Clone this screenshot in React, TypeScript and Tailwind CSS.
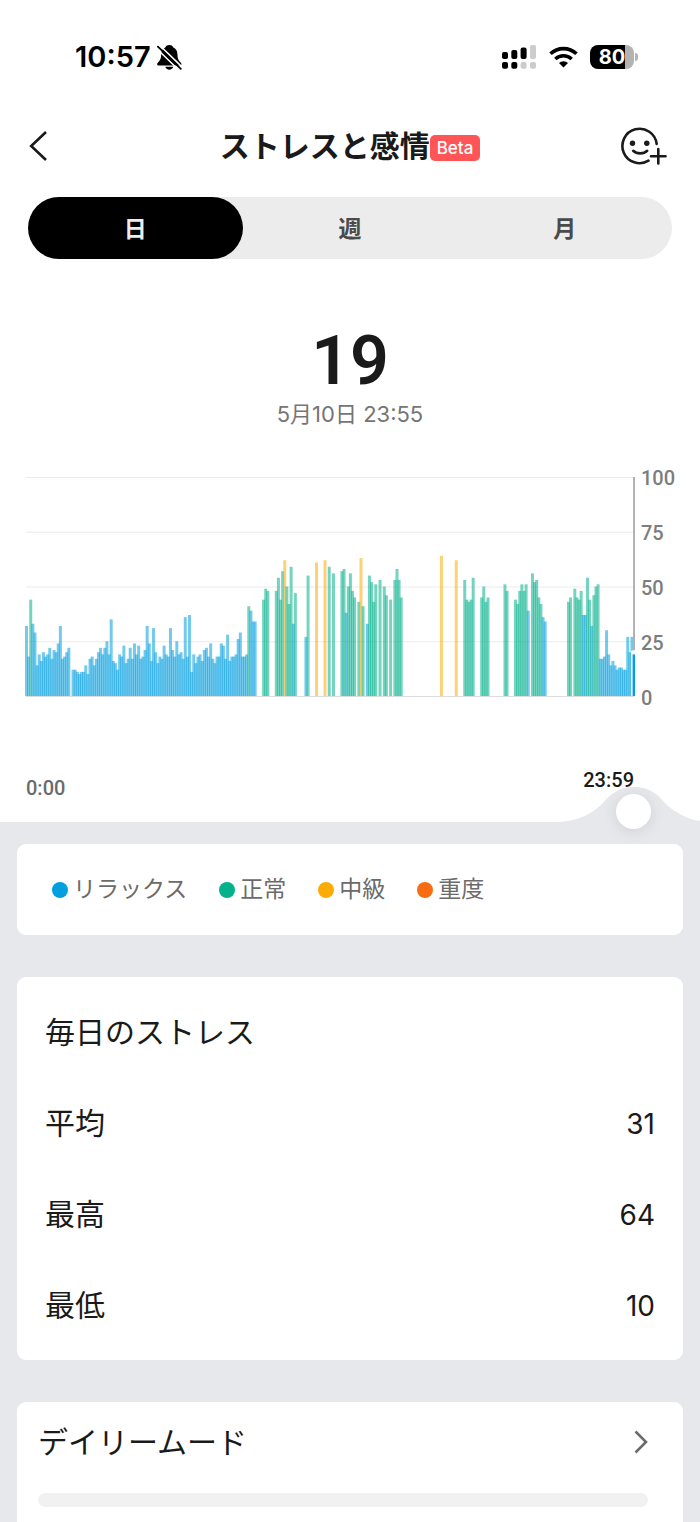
import { useState } from "react";

const FONT = "font-[Inter,'Noto_Sans_CJK_JP',sans-serif]";
const DIGITS = "font-[Roboto,'Noto_Sans_CJK_JP',sans-serif]";

const LAST_SLOT = 287;
const SLOT_WIDTH = 2.117;

// One reading every five minutes, stored as runs: [first slot, readings]
const runs: [number, number[]][] = [
  [0, [32, 18, 44, 33, 29, 14, 19, 16, 20, 18, 19, 22, 17, 21, 20, 24, 32, 17, 18, 20, 22]],
  [22, [12, 12, 11, 10, 11, 11, 14, 10, 17, 18, 14, 17, 20, 22, 19, 22, 25, 19, 35, 16, 15, 12]],
  [44, [19, 18, 23, 15, 17, 22, 17, 24, 19, 23, 17, 18, 21, 32, 24, 16, 31, 20, 15, 18, 17, 23]],
  [66, [19, 18, 31, 21, 18, 25, 19, 20, 17, 36, 18, 37, 11, 19, 15, 18, 19, 16, 21, 22, 18, 24]],
  [88, [17, 15, 18, 18, 24, 23, 17, 28, 16, 18, 18, 19, 26, 29, 18, 18, 19, 41, 39, 34, 34]],
  [112, [44, 49, 48]],
  [118, [48, 54, 44, 57, 62, 50, 42, 59, 33, 47]],
  [132, [27, 55]],
  [137, [61]],
  [141, [62]],
  [143, [59]],
  [145, [56]],
  [149, [57, 58, 38, 50, 56, 48, 45]],
  [157, [43, 63, 41]],
  [161, [33, 55, 52, 43, 51]],
  [167, [53]],
  [169, [50, 46]],
  [172, [44]],
  [174, [53, 58, 53, 45]],
  [196, [64]],
  [203, [62]],
  [207, [53, 44, 43, 44, 54]],
  [215, [45, 50, 43, 45]],
  [226, [51, 48]],
  [231, [44, 42, 48, 51, 48, 51, 39]],
  [239, [56, 52, 53, 45, 42, 36, 34]],
  [256, [43, 45]],
  [259, [49, 45, 44, 48, 37, 37, 54, 44, 32, 46, 50, 51, 17, 17, 18, 30, 19, 14, 16, 14, 12, 13, 13, 12, 12, 27, 20, 27, 19]],
];

const readings = runs.flatMap(([start, values]) =>
  values.map((value, i) => ({ slot: start + i, value }))
);

const tabs = ["日", "週", "月"];

const levels = [
  { name: "リラックス", dot: "bg-[#019fde]" },
  { name: "正常", dot: "bg-[#03b18a]" },
  { name: "中級", dot: "bg-[#fdab05]" },
  { name: "重度", dot: "bg-[#f66d14]" },
];

const stats = [
  { label: "平均", value: 31 },
  { label: "最高", value: 64 },
  { label: "最低", value: 10 },
];

const levelColor = (value: number) => {
  if (value < 40) return "#019fde";
  if (value < 60) return "#03b18a";
  if (value < 80) return "#fdab05";
  return "#f66d14";
};

const clock = (minutes: number) =>
  `${Math.floor(minutes / 60)}:${String(minutes % 60).padStart(2, "0")}`;

const StatusBar = () => (
  <div className="flex h-[30px] items-center justify-between pl-[75px] pr-[62px] text-black">
    <div className="flex items-center gap-1.5">
      <span className="text-[29px] font-semibold leading-[30px]">10:57</span>
      <svg className="h-[25px] w-[25px]" viewBox="0 0 25 25" aria-hidden="true">
        <path
          d="M12.300 0C10.400 0 9 .9 8.500 2.300 5.600 3.600 4.200 6.200 4.200 9.300c0 4.300-1.200 6.300-3.200 8.200-1.500 1.500-.9 3 .8 3h21c1.700 0 2.300-1.500.8-3-2-1.900-3.200-3.900-3.200-8.200 0-3.100-1.400-5.700-4.300-7C15.600.9 14.200 0 12.300 0ZM8.300 21.800c.5 1.700 2.100 2.900 4 2.900s3.500-1.200 4-2.900Z"
          fill="#000"
        />
        <path d="M-.8 3.200 22.300 25.500M2.300 0 25.500 22.400" stroke="#fff" strokeWidth="1.500" />
        <path d="M.9 1.700 23.800 23.800" stroke="#000" strokeWidth="1.800" strokeLinecap="round" />
      </svg>
    </div>
    <div className="flex items-center gap-3">
      <svg className="h-6 w-[35px]" viewBox="0 0 35 24" aria-hidden="true">
        <rect x="0" y="7" width="6" height="7" rx="2" />
        <rect x="9.300" y="5" width="6" height="9" rx="2" />
        <rect x="18.600" y="2.500" width="6" height="11.500" rx="2" />
        <rect x="28" y="0" width="6" height="14" rx="2" fill="#ccc" />
        <rect x="0" y="17" width="6" height="6.700" rx="2" />
        <rect x="9.300" y="17" width="6" height="6.700" rx="2" />
        <rect x="18.600" y="17" width="6" height="6.700" rx="2" fill="#ccc" />
        <rect x="28" y="17" width="6" height="6.700" rx="2" fill="#ccc" />
      </svg>
      <svg className="h-[22px] w-[29px]" viewBox="0 0 29 22" fill="none" stroke="#000" aria-hidden="true">
        <path d="M1.500 7.800a18.800 18.800 0 0 1 26 0" strokeWidth="3.600" />
        <path d="M6.300 13a12 12 0 0 1 16.400 0" strokeWidth="3.400" />
        <path d="M14.500 21.500 10 17.100a6.400 6.400 0 0 1 9 0Z" fill="#000" stroke="none" />
      </svg>
      <div className="flex items-center gap-px">
        <span className="flex h-6 w-11 items-center justify-center rounded-lg bg-[linear-gradient(to_right,#000_80%,#b3b3b3_80%)] text-xl font-bold leading-6 text-white">
          80
        </span>
        <span className="h-2 w-[3px] rounded-r-full bg-[#b3b3b3]" />
      </div>
    </div>
  </div>
);

const Header = () => (
  <header className="mt-[42px] flex h-16 items-center justify-between px-7 text-[#1a1a1a]">
    <button type="button" aria-label="戻る" className="w-[52px]">
      <svg className="h-8 w-5" viewBox="0 0 20 32" fill="none" stroke="currentColor" strokeWidth="2.600">
        <path d="M18 2 3.200 16 18 30" />
      </svg>
    </button>
    <div className="flex items-center">
      <h1 className="text-[30px] font-bold leading-10">ストレスと感情</h1>
      <span className="mt-1 rounded-[5px] bg-[#ff5556] px-[7px] text-[17px] font-medium leading-[26px] text-white">
        Beta
      </span>
    </div>
    <button type="button" aria-label="気分を追加" className="w-[52px]">
      <svg className="h-10 w-12" viewBox="0 0 48 40" fill="none" stroke="currentColor" strokeWidth="2.600" strokeLinecap="round">
        <path d="M36.700 18A17.200 17.200 0 1 0 28.500 34.700" />
        <path d="M13.200 24.800c3.500 3.400 10.500 3.400 14 0M38.300 23v14.500M31 30.200h14.500" />
        <circle cx="12.500" cy="17.300" r="2.700" fill="currentColor" stroke="none" />
        <circle cx="26.800" cy="17.300" r="2.700" fill="currentColor" stroke="none" />
      </svg>
    </button>
  </header>
);

const StressChart = ({ slot }: { slot: number }) => {
  const current = readings.find((r) => r.slot === slot)?.value ?? 0;
  const x = slot * SLOT_WIDTH;

  return (
    <div className="mt-[49px] flex gap-1.5 pl-[25px] pr-6">
      <svg
        className="h-[220px] min-w-0 flex-1"
        viewBox="0 0 610 220"
        preserveAspectRatio="none"
        role="img"
        aria-label="ストレスの推移"
      >
        {[0, 25, 50, 75, 100].map((value) => (
          <rect key={value} x="1" y={219 - value * 2.19} width="608" height="1" fill={value === 0 ? "#dcdcdc" : "#ebebeb"} />
        ))}
        {readings
          .filter((r) => r.slot !== slot)
          .map((r) => (
            <rect
              key={r.slot}
              x={r.slot * SLOT_WIDTH}
              y={219 - r.value * 2.19}
              width="3"
              height={r.value * 2.19}
              fill={levelColor(r.value)}
              fillOpacity="0.550"
            />
          ))}
        <rect x={x + 0.5} y="0" width="2" height={215 - current * 2.19} fill="#b0b0b0" />
        {current > 0 && (
          <>
            <rect x={x - 1.5} y={215 - current * 2.19} width="6" height={4 + current * 2.19} rx="1" fill="#fff" />
            <rect x={x} y={219 - current * 2.19} width="3" height={current * 2.19} fill={levelColor(current)} />
          </>
        )}
      </svg>
      <div className={`-mb-[11px] -mt-[9px] flex w-[35px] flex-col justify-between text-xl font-medium leading-5 text-[#7d7d7d] ${DIGITS}`}>
        <span>100</span>
        <span>75</span>
        <span>50</span>
        <span>25</span>
        <span>0</span>
      </div>
    </div>
  );
};

const Timeline = ({ slot, onChange }: { slot: number; onChange: (slot: number) => void }) => (
  <div className="relative h-[125px] overflow-x-clip">
    <div className={`flex items-start justify-between pl-[26px] pr-[66px] pt-[71px] text-xl font-medium leading-6 ${DIGITS}`}>
      <span className="pt-2 text-[#6b6b6b]">0:00</span>
      <span className="text-[#1a1a1a]">{clock(slot * 5 + 4)}</span>
    </div>
    {/* The grey area swells up under the thumb */}
    <div className="absolute bottom-0 left-[26px] right-[66px] h-9">
      <svg
        className="absolute bottom-0 h-9 w-[150px] -translate-x-1/2"
        style={{ left: `${(slot / LAST_SLOT) * 100}%` }}
        viewBox="0 0 150 36"
        aria-hidden="true"
      >
        <path d="M0 36C20 35 33 27 42 19 50 10 58 1 75 1s25 9 33 18c9 8 22 16 42 17Z" fill="#e7e8ec" />
      </svg>
    </div>
    <input
      type="range"
      aria-label="時刻"
      min={0}
      max={LAST_SLOT}
      value={slot}
      onChange={(e) => onChange(Number(e.target.value))}
      className="absolute -bottom-[7px] left-2 right-[49px] z-10 h-[35px] appearance-none bg-transparent outline-none [&::-webkit-slider-thumb]:h-[35px] [&::-webkit-slider-thumb]:w-[35px] [&::-webkit-slider-thumb]:appearance-none [&::-webkit-slider-thumb]:rounded-full [&::-webkit-slider-thumb]:bg-white [&::-webkit-slider-thumb]:shadow-[0_2px_16px_rgba(0,0,0,0.1)]"
    />
  </div>
);

const App = () => {
  const [tab, setTab] = useState("日");
  const [slot, setSlot] = useState(LAST_SLOT);
  const current = readings.find((r) => r.slot === slot);

  return (
    <div lang="ja" className={`min-h-screen bg-[#e7e8ec] ${FONT}`}>
      <section className="bg-white pt-[42px]">
        <StatusBar />
        <Header />

        <div role="tablist" className="mx-7 mt-[19px] flex h-[62px] rounded-full bg-[#ececec]">
          {tabs.map((name) => (
            <button
              key={name}
              type="button"
              role="tab"
              aria-selected={tab === name}
              onClick={() => setTab(name)}
              className={`flex-1 rounded-full pt-0.5 text-[23px] font-bold ${
                tab === name ? "bg-black text-[#ececec]" : "text-[#4a4a4a]"
              }`}
            >
              {name}
            </button>
          ))}
        </div>

        <div className="mt-[66px] text-center">
          <p className={`text-[68px] font-semibold leading-[72px] text-[#1a1a1a] ${DIGITS}`}>
            {current ? current.value : "--"}
          </p>
          <p className="mt-[3px] text-[22px] leading-7 text-[#757575]">5月10日 {clock(slot * 5)}</p>
        </div>

        <StressChart slot={slot} />
        <Timeline slot={slot} onChange={setSlot} />
      </section>

      <main className="flex flex-col gap-[42px] px-[17px] pt-[22px] text-[#1a1a1a]">
        <ul className="flex h-[91px] items-center gap-8 rounded-[9px] bg-white px-[35px] text-[23px] text-[#6b6b6b]">
          {levels.map((level) => (
            <li key={level.name} className="flex items-center gap-[5px]">
              <span className={`h-4 w-4 rounded-full ${level.dot}`} />
              {level.name}
            </li>
          ))}
        </ul>

        <section className="rounded-[9px] bg-white px-7 pb-[9px] pt-2.5 text-[30px]">
          <h2 className="flex h-[91px] items-center">毎日のストレス</h2>
          <dl>
            {stats.map((stat) => (
              <div key={stat.label} className="flex h-[91px] items-center justify-between">
                <dt>{stat.label}</dt>
                <dd className="text-[28px]">{stat.value}</dd>
              </div>
            ))}
          </dl>
        </section>

        <section className="rounded-t-[9px] bg-white pb-[15px] pl-[21px] pr-[35px]">
          <button type="button" className="flex h-20 w-full items-center justify-between text-[30px]">
            デイリームード
            <svg className="h-6 w-3.5" viewBox="0 0 14 24" fill="none" stroke="#6b6b6b" strokeWidth="2.600" aria-hidden="true">
              <path d="M1.500 1.500 12 12 1.500 22.500" />
            </svg>
          </button>
          <div className="mt-[11px] h-3.5 rounded-full bg-[#f1f1f1]" />
        </section>
      </main>
    </div>
  );
};

export default App;
